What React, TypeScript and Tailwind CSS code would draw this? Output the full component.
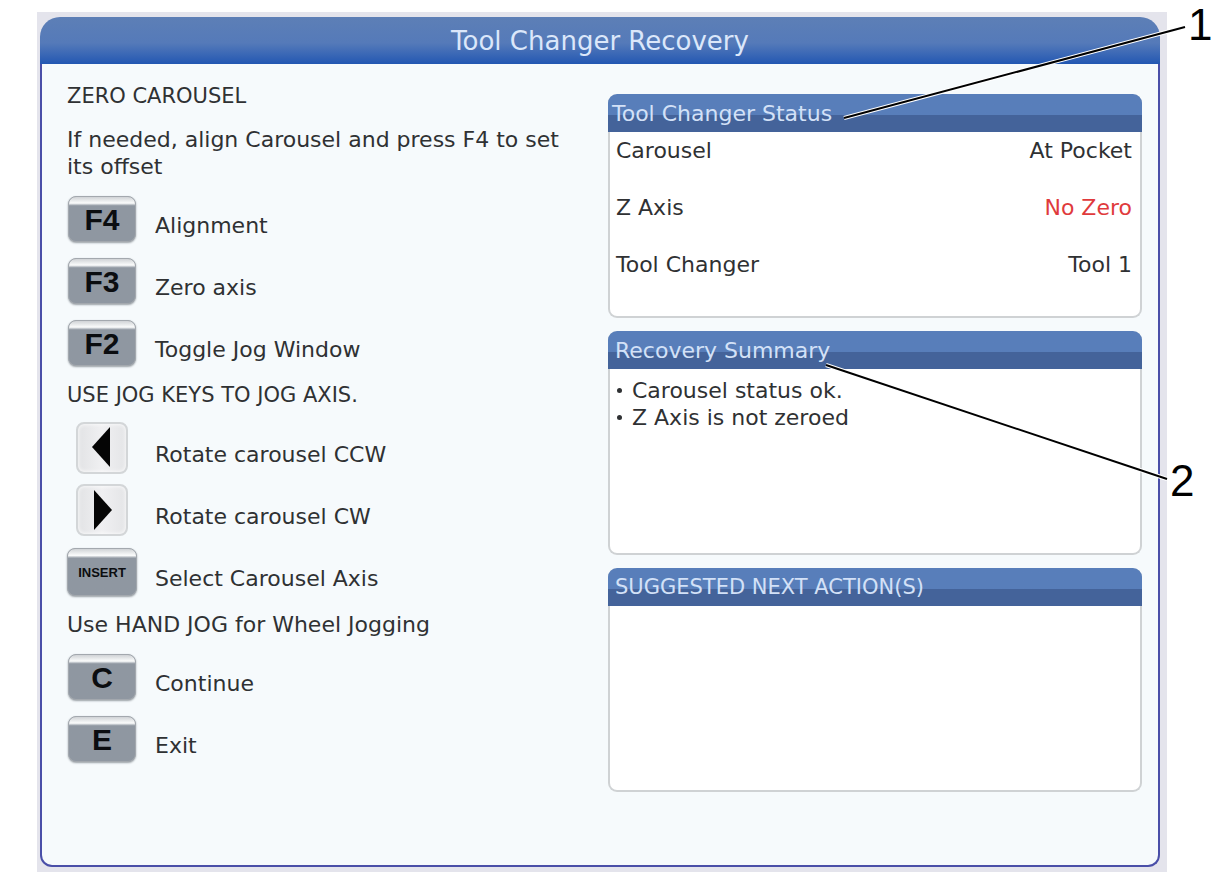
import type { ReactNode } from "react";

type StatusRow = {
  label: string;
  value: string;
  alert?: boolean;
};

const statusRows: StatusRow[] = [
  { label: "Carousel", value: "At Pocket" },
  { label: "Z Axis", value: "No Zero", alert: true },
  { label: "Tool Changer", value: "Tool 1" },
];

const summary = ["Carousel status ok.", "Z Axis is not zeroed"];

export default function App() {
  return (
    <div className="relative min-h-screen bg-white pt-3 pr-[57px] pl-[37px] font-['DejaVu_Sans',sans-serif] text-[22px] leading-[27px] text-[#2f3133]">
      <main className="flex min-h-[860px] flex-col bg-[#e4e4ec] pt-[5px] pr-[7px] pb-[5px] pl-[3px]">
        <header className="flex h-[47px] items-center justify-center rounded-t-[20px] bg-linear-to-b from-[#5d7fb6] via-[#557ab9] via-55% to-[#2257b2] pt-px">
          <h1 className="text-[26px] text-[#dbe7fa]">Tool Changer Recovery</h1>
        </header>

        <div className="flex flex-1 rounded-b-[12px] border-2 border-t-0 border-[#4a4fa8] bg-[#f6fafc] pr-4 pl-[25px]">
          <section className="w-[541px] shrink-0 pt-[19px]">
            <h2 className="text-[21px]">ZERO CAROUSEL</h2>
            <p className="mt-4 mb-2 max-w-[515px]">
              If needed, align Carousel and press F4 to set its offset
            </p>
            <KeyRow id="f4" label="Alignment">
              <GrayKey id="f4">F4</GrayKey>
            </KeyRow>
            <KeyRow id="f3" label="Zero axis">
              <GrayKey id="f3">F3</GrayKey>
            </KeyRow>
            <KeyRow id="f2" label="Toggle Jog Window">
              <GrayKey id="f2">F2</GrayKey>
            </KeyRow>

            <h2 className="my-2 text-[21px]">USE JOG KEYS TO JOG AXIS.</h2>
            <KeyRow id="ccw" label="Rotate carousel CCW">
              <ArrowKey id="ccw" points="16,25 34,5 34,45" />
            </KeyRow>
            <KeyRow id="cw" label="Rotate carousel CW">
              <ArrowKey id="cw" points="36,26 18,6 18,46" />
            </KeyRow>
            <KeyRow id="insert" label="Select Carousel Axis">
              <GrayKey id="insert" wide>
                INSERT
              </GrayKey>
            </KeyRow>

            <h2 className="my-2">Use HAND JOG for Wheel Jogging</h2>
            <KeyRow id="continue" label="Continue">
              <GrayKey id="continue">C</GrayKey>
            </KeyRow>
            <KeyRow id="exit" label="Exit">
              <GrayKey id="exit">E</GrayKey>
            </KeyRow>
          </section>

          <section className="flex min-w-0 flex-1 flex-col gap-[13px] pt-[30px]">
            <Panel title="Tool Changer Status" titleClass="pl-1">
              <table className="mt-[5px] w-full">
                <tbody>
                  {statusRows.map((row) => (
                    <tr key={row.label} className="h-[57px] align-top">
                      <th scope="row" className="pl-1.5 text-left font-normal">
                        {row.label}
                      </th>
                      <td
                        className={
                          row.alert
                            ? "pr-2 text-right text-[#e03a3c]"
                            : "pr-2 text-right"
                        }
                      >
                        {row.value}
                      </td>
                    </tr>
                  ))}
                </tbody>
              </table>
            </Panel>

            <Panel title="Recovery Summary">
              <ul className="mt-2 pl-1.5">
                {summary.map((item) => (
                  <li key={item} className="flex items-center gap-2.5">
                    <span className="ml-px size-[5px] rounded-full bg-[#2f3133]" />
                    {item}
                  </li>
                ))}
              </ul>
            </Panel>

            <Panel
              title="SUGGESTED NEXT ACTION(S)"
              titleClass="pl-[7px] text-[21px]"
            />
          </section>
        </div>
      </main>

      <Callouts />
    </div>
  );
}

function Panel({
  title,
  titleClass = "pl-[7px]",
  children,
}: {
  title: string;
  titleClass?: string;
  children?: ReactNode;
}) {
  return (
    <section className="min-h-[224px] rounded-[9px] border-2 border-t-0 border-[#cfd2d4] bg-white">
      <h2
        className={`-mx-0.5 flex h-[38px] items-center rounded-t-[9px] bg-linear-to-b from-[#587eba] from-56% to-[#44639a] to-56% text-[#d3e1f7] ${titleClass}`}
      >
        {title}
      </h2>
      {children}
    </section>
  );
}

function KeyRow({
  id,
  label,
  children,
}: {
  id: string;
  label: string;
  children: ReactNode;
}) {
  return (
    <div className="flex h-[62px] items-center">
      <div className="flex w-[70px] justify-center">{children}</div>
      <span id={`${id}-label`} className="pt-3 pl-[18px]">
        {label}
      </span>
    </div>
  );
}

function GrayKey({
  id,
  wide,
  children,
}: {
  id: string;
  wide?: boolean;
  children: ReactNode;
}) {
  const size = wide
    ? "h-12 w-[70px] text-[13px]"
    : "h-[46px] w-[68px] pt-0.5 text-[30px]";

  return (
    <button
      type="button"
      aria-describedby={`${id}-label`}
      className={`${size} flex items-center justify-center rounded-[8px] border border-[#a3a8ae] bg-[#8b939e] bg-linear-to-b from-[#d0d3d6] via-[#fbfcfc] via-14% to-[#8f97a1] to-20% font-['Liberation_Sans',Arial,sans-serif] leading-none font-bold text-[#0b0d10] shadow-[0_1px_2px_#9aa0a6]`}
    >
      {children}
    </button>
  );
}

function ArrowKey({ id, points }: { id: string; points: string }) {
  return (
    <button
      type="button"
      aria-labelledby={`${id}-label`}
      className="size-[52px] rounded-[8px] border-2 border-[#d3d6d8] bg-linear-to-r from-[#e2e3e5] via-[#f0f0f2] to-[#e4e5e7] shadow-[inset_0_0_4px_#ffffff]"
    >
      <svg viewBox="2 2 48 48" className="size-12">
        <polygon points={points} fill="#050505" />
      </svg>
    </button>
  );
}

// Numbered leader lines drawn over the right side of the screen
function Callouts() {
  return (
    <div className="pointer-events-none absolute top-0 right-0 font-['Liberation_Sans',Arial,sans-serif] text-black">
      <svg width="400" height="520" viewBox="0 0 400 520" fill="none">
        <g stroke="#ffffff" strokeWidth="4">
          <path d="M20 118L361 27" />
          <path d="M2 365L343 479" />
        </g>
        <g stroke="#000000" strokeWidth="2">
          <path d="M20 118L361 27" />
          <path d="M2 365L343 479" />
        </g>
        <text x="364" y="40" fontSize="44" fill="#000000">
          1
        </text>
        <text x="346" y="496" fontSize="44" fill="#000000">
          2
        </text>
      </svg>
    </div>
  );
}
